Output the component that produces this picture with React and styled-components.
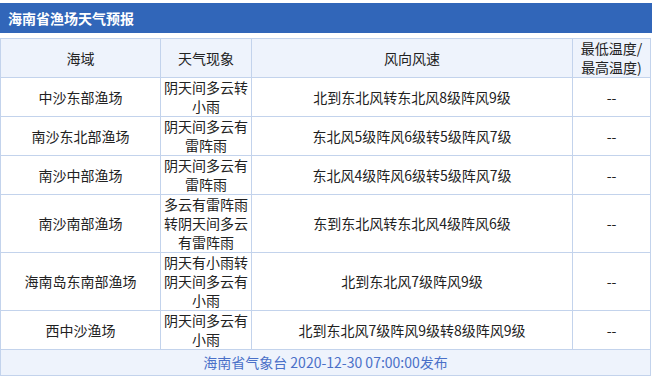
import React from "react";
import styled, { createGlobalStyle } from "styled-components";

const Global = createGlobalStyle`
  html, body { margin: 0; padding: 0; background: #fff; }
  body { font-family: "Noto Sans CJK SC", "Liberation Sans", sans-serif; }
`;

const Wrap = styled.div`
  width: 652px;
  padding-top: 3px;
  display: flex;
  flex-direction: column;
  gap: 5px;
`;

const TitleBar = styled.div`
  height: 30px;
  background: #3166b9;
  color: #fff;
  font-size: 14px;
  font-weight: bold;
  line-height: 30px;
  padding-left: 8px;
`;

const Table = styled.table`
  width: 650px;
  border-collapse: collapse;
  table-layout: fixed;
  font-size: 14px;
  line-height: 19px;
  color: #222;
`;

const Th = styled.th`
  border: 1px solid #c3d3ec;
  background: #eef3fc;
  font-weight: normal;
  padding: 0 3px;
  height: 38px;
  text-align: center;
  vertical-align: middle;
`;

const Td = styled.td`
  border: 1px solid #c3d3ec;
  padding: 0 3px;
  height: 38px;
  text-align: center;
  vertical-align: middle;
`;

const Foot = styled.td`
  border: 1px solid #c3d3ec;
  background: #eef3fc;
  color: #4a70c8;
  padding: 3px 3px;
  text-align: center;
`;

const rows = [
  ["中沙东部渔场", "阴天间多云转小雨", "北到东北风转东北风8级阵风9级"],
  ["南沙东北部渔场", "阴天间多云有雷阵雨", "东北风5级阵风6级转5级阵风7级"],
  ["南沙中部渔场", "阴天间多云有雷阵雨", "东北风4级阵风6级转5级阵风7级"],
  ["南沙南部渔场", "多云有雷阵雨转阴天间多云有雷阵雨", "东到东北风转东北风4级阵风6级"],
  ["海南岛东南部渔场", "阴天有小雨转阴天间多云有小雨", "北到东北风7级阵风9级"],
  ["西中沙渔场", "阴天间多云有小雨", "北到东北风7级阵风9级转8级阵风9级"],
];

export default function App() {
  return (
    <>
      <Global />
      <Wrap>
        <TitleBar>海南省渔场天气预报</TitleBar>
        <Table>
          <colgroup>
            <col style={{ width: 160 }} />
            <col style={{ width: 91 }} />
            <col style={{ width: 321 }} />
            <col style={{ width: 78 }} />
          </colgroup>
          <thead>
            <tr>
              <Th>海域</Th>
              <Th>天气现象</Th>
              <Th>风向风速</Th>
              <Th>最低温度/<br />最高温度)</Th>
            </tr>
          </thead>
          <tbody>
            {rows.map((r) => (
              <tr key={r[0]}>
                <Td>{r[0]}</Td>
                <Td>{r[1]}</Td>
                <Td>{r[2]}</Td>
                <Td>--</Td>
              </tr>
            ))}
            <tr>
              <Foot colSpan={4}>海南省气象台 2020-12-30 07:00:00发布</Foot>
            </tr>
          </tbody>
        </Table>
      </Wrap>
    </>
  );
}
